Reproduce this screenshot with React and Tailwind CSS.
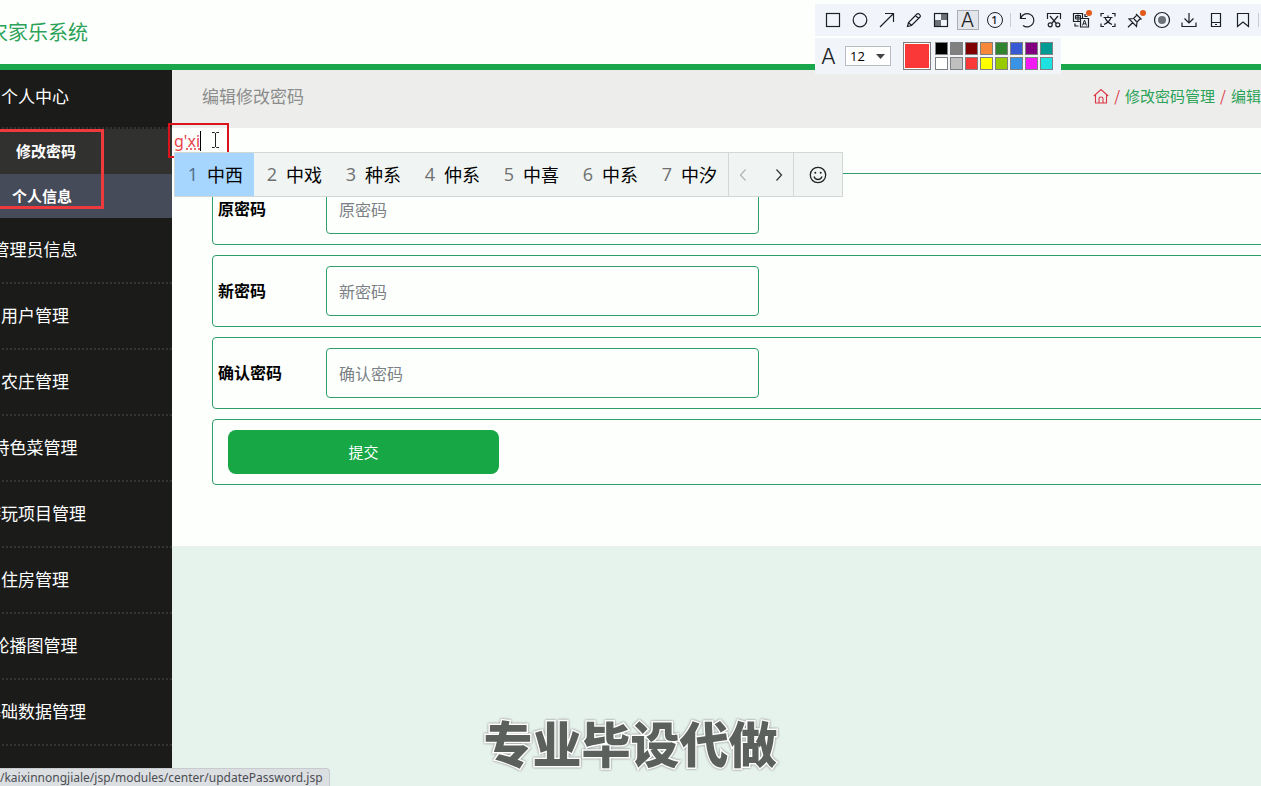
import React, { useState } from 'react';

const menuItems = [
  '管理员信息',
  '用户管理',
  '农庄管理',
  '特色菜管理',
  '游玩项目管理',
  '住房管理',
  '轮播图管理',
  '基础数据管理',
];

const fields = [
  { id: 'oldPassword', label: '原密码' },
  { id: 'newPassword', label: '新密码' },
  { id: 'confirmPassword', label: '确认密码' },
];

const candidates = ['中西', '中戏', '种系', '仲系', '中喜', '中系', '中汐'];

const swatches = [
  'bg-black',
  'bg-[#808080]',
  'bg-[#800000]',
  'bg-[#f7883a]',
  'bg-[#308430]',
  'bg-[#385ad3]',
  'bg-[#800080]',
  'bg-[#009a94]',
  'bg-white',
  'bg-[#c0c0c0]',
  'bg-[#fb3838]',
  'bg-[#ffff00]',
  'bg-[#99cc00]',
  'bg-[#3894e4]',
  'bg-[#f31bf3]',
  'bg-[#1ee1e1]',
];

const Icon = ({ children }) => (
  <svg
    width="18"
    height="18"
    viewBox="0 0 18 18"
    fill="none"
    stroke="#1c1f26"
    strokeWidth="1.2"
    className="shrink-0"
  >
    {children}
  </svg>
);

const drawTools = [
  { name: '矩形', icon: <Icon><rect x="2.5" y="2.5" width="13" height="13" /></Icon> },
  { name: '椭圆', icon: <Icon><circle cx="9" cy="9" r="6.8" /></Icon> },
  { name: '箭头', icon: <Icon><path d="M2 16 15.5 2.5M7 2.5h8.5V11" /></Icon> },
  {
    name: '画笔',
    icon: (
      <Icon>
        <path d="M2.5 15.5l1-4L12 3q1-1 2.2.2l.6.6q1.2 1.2.2 2.2l-8.5 8.5zM10.5 4.5l3 3M3.5 11.5l3 3" />
      </Icon>
    ),
  },
  {
    name: '马赛克',
    icon: (
      <Icon>
        <rect x="9" y="3" width="6" height="6" fill="#6c7078" stroke="none" />
        <rect x="3" y="9" width="6" height="6" fill="#6c7078" stroke="none" />
        <rect x="2.5" y="2.5" width="13" height="13" />
      </Icon>
    ),
  },
];

const editTools = [
  {
    name: '撤销',
    icon: <Icon><path d="M2.5 2v5.5H8M2.8 7.2A6.7 6.7 0 1 1 5 14.5" /></Icon>,
  },
  {
    name: '裁剪',
    icon: (
      <Icon>
        <path d="M2.5 8V2.5h13V8M5 5l6.3 7.5M13 5l-6.3 7.5" />
        <circle cx="5.2" cy="13.8" r="2" />
        <circle cx="12.8" cy="13.8" r="2" />
      </Icon>
    ),
  },
  {
    name: '翻译',
    dot: true,
    icon: (
      <Icon>
        <path d="M8 10.5H1.5v-8h9V7M8.5 7.5h8v8.5h-8zM3 12.5v2.5h3.5M13 3v2.5h2.5" />
        <path d="M3.5 4.5h5v3.5h-5zM6 3.5v7M3.5 6.2h5" strokeWidth="1" />
        <path d="M10.5 14.5l2-5.5 2 5.5M11.2 12.8h2.6" strokeWidth="1" />
      </Icon>
    ),
  },
  {
    name: '识别文字',
    icon: (
      <Icon>
        <path d="M2 5.5V2.5h3M13 2.5h3v3M16 12.5v3h-3M5 15.5H2v-3" />
        <path d="M4.5 6.5h9M9 4.5v2M12 6.5q-1.500 4.500-7 7M6 6.500q1.500 4.500 7 7" />
      </Icon>
    ),
  },
  {
    name: '钉住',
    dot: true,
    icon: (
      <Icon>
        <path d="M10 3l5.500 5.500M11 4L7.500 7.500 3 8l7.500 7.500.500-4.500L14.500 7.500M6.800 11.500 2 16.200M8 8l2.500 2.500" />
      </Icon>
    ),
  },
  {
    name: '录制',
    icon: (
      <Icon>
        <circle cx="9" cy="9" r="7.5" />
        <circle cx="9" cy="9" r="4" fill="#6c7078" stroke="none" />
      </Icon>
    ),
  },
  { name: '保存', icon: <Icon><path d="M9 2v9.5M4.5 7.5 9 12l4.5-4.5M2 11.5v4h14v-4" /></Icon> },
  {
    name: '发送到手机',
    icon: <Icon><path d="M4.5 2.5h9v13h-9zM4.5 11.5h9M8 13.5h2" /></Icon>,
  },
  { name: '收藏', icon: <Icon><path d="M3.5 2.5h11v13L9 11l-5.5 4.5z" /></Icon> },
];

const ToolButton = ({ tool }) => (
  <button type="button" aria-label={tool.name} className="relative flex h-5 w-[27px] items-center justify-center">
    {tool.icon}
    {tool.dot && <span className="absolute top-0 right-0.5 h-1.5 w-1.5 rounded-full bg-[#e2591b]" />}
  </button>
);

const CaptureToolbar = () => {
  const [size, setSize] = useState('12');

  return (
    <div className="absolute top-1 right-0 z-30 flex flex-col items-start">
      <div className="flex h-8 items-center bg-[#f1f5fb] pl-1">
        {drawTools.map((tool) => (
          <ToolButton key={tool.name} tool={tool} />
        ))}
        <button type="button" className="flex w-[27px] items-center justify-center">
          <span className="flex h-5 w-[22px] items-center justify-center border border-[#aaadb3] bg-[#e2e5ea] font-[Inter,sans-serif] text-xl leading-5 font-light text-[#1c1f26]">
            A
          </span>
        </button>
        <button type="button" className="flex w-[27px] items-center justify-center">
          <span className="flex h-4 w-4 items-center justify-center rounded-full border border-[#1c1f26] font-['Open_Sans',sans-serif] text-[11px] leading-3 font-semibold text-[#1c1f26]">
            1
          </span>
        </button>
        <span className="mx-0.5 h-3.5 w-px bg-[#c9ccd1]" />
        {editTools.map((tool) => (
          <ToolButton key={tool.name} tool={tool} />
        ))}
        <span className="mx-0.5 h-3.5 w-px bg-[#c9ccd1]" />
      </div>

      <div className="flex h-[38px] items-center border-t-2 border-white bg-[#f1f5fa] pr-2 pl-1.5">
        <label
          htmlFor="fontSize"
          className="w-6 font-[Inter,sans-serif] text-[22px] leading-6 font-light text-[#1c1f26]"
        >
          A
        </label>
        <div className="relative flex">
          <select
            id="fontSize"
            value={size}
            onChange={(e) => setSize(e.target.value)}
            className="h-5 w-[46px] appearance-none border border-[#b9bcc0] bg-white pl-1 font-['Open_Sans',sans-serif] text-[13px] leading-4 text-black"
          >
            <option>12</option>
            <option>14</option>
            <option>16</option>
          </select>
          <svg className="pointer-events-none absolute top-2 right-1.5" width="9" height="5" viewBox="0 0 9 5">
            <path d="M0 0h9L4.5 5z" fill="#404348" />
          </svg>
        </div>
        <button
          type="button"
          aria-label="当前颜色"
          className="ml-3 h-7 w-7 border border-[#808080] bg-[#fb3838] outline-1 -outline-offset-2 outline-white"
        />
        <div className="ml-1 grid grid-cols-8 gap-0.5">
          {swatches.map((color) => (
            <button key={color} type="button" aria-label="颜色" className={`h-[13px] w-[13px] border border-[#808080] ${color}`} />
          ))}
        </div>
      </div>
    </div>
  );
};

const InputMethodBar = () => (
  <div className="absolute top-[152px] left-[174px] z-20 flex h-[45px] border border-[#d3d7d6] bg-[#f0f4f3] text-lg text-black">
    {candidates.map((word, i) => (
      <button
        key={word}
        type="button"
        className={`flex w-[79px] items-center gap-2 pb-0.5 pl-3 whitespace-nowrap ${i === 0 ? 'bg-[#a6d5fd]' : ''}`}
      >
        <span className={`w-3 text-center font-['Open_Sans',sans-serif] ${i === 0 ? 'text-[#4e6d8a]' : 'text-[#6d706f]'}`}>
          {i + 1}
        </span>
        {word}
      </button>
    ))}
    <div className="flex w-[65px] items-center justify-between border-l border-[#d3d7d6] px-2.5">
      <button type="button" aria-label="上一页">
        <svg width="8" height="12" viewBox="0 0 8 12" fill="none" stroke="#b0b3b2" strokeWidth="1.2">
          <path d="M6.5.5 1.5 6l5 5.5" />
        </svg>
      </button>
      <button type="button" aria-label="下一页">
        <svg width="8" height="12" viewBox="0 0 8 12" fill="none" stroke="#333" strokeWidth="1.2">
          <path d="M1.5.5l5 5.5-5 5.5" />
        </svg>
      </button>
    </div>
    <button
      type="button"
      aria-label="表情"
      className="flex w-[49px] items-center justify-center border-l border-[#d3d7d6]"
    >
      <svg width="18" height="18" viewBox="0 0 18 18" fill="none" stroke="#222" strokeWidth="1.3">
        <circle cx="9" cy="9" r="7.7" />
        <path d="M5 10.5q1 3 4 3t4-3" />
        <circle cx="6.3" cy="6.8" r="1" fill="#222" stroke="none" />
        <circle cx="11.7" cy="6.8" r="1" fill="#222" stroke="none" />
      </svg>
    </button>
  </div>
);

const Sidebar = () => (
  <nav className="w-[274px] shrink-0 bg-[#1b1c1a] text-[17px] text-white">
    <a
      href="#center"
      className="flex h-[59px] items-center justify-center border-b-2 border-dotted border-[#343533] pb-1.5"
    >
      个人中心
    </a>
    <div className="text-[15px] font-bold">
      <a href="#password" className="flex h-[45px] items-center bg-[#31322f] pl-[118px]">
        修改密码
      </a>
      <a href="#info" className="flex h-11 items-center bg-[#464b59] pl-[114px]">
        个人信息
      </a>
    </div>
    {menuItems.map((item) => (
      <a
        key={item}
        href="#menu"
        className="flex h-[66px] items-center justify-center border-b-2 border-dotted border-[#343533] pb-0.5"
      >
        {item}
      </a>
    ))}
  </nav>
);

const PasswordForm = () => (
  <form onSubmit={(e) => e.preventDefault()} className="flex flex-col gap-2.5 bg-[#fdfffd] px-10 pt-[45px] pb-[61px]">
    {fields.map((field) => (
      <div key={field.id} className="flex items-center rounded-sm border border-[#2f9d69] py-2.5 pl-[5px]">
        <label htmlFor={field.id} className="w-[108px] pb-0.5 text-base font-bold text-black">
          {field.label}
        </label>
        <input
          id={field.id}
          type="password"
          placeholder={field.label}
          className="h-[50px] w-[433px] rounded-sm border border-[#2f9d69] px-3 text-base placeholder:text-[#7b8085]"
        />
      </div>
    ))}
    <div className="rounded-sm border border-[#2f9d69] px-[15px] py-2.5">
      <button type="submit" className="block h-11 w-[271px] rounded-lg bg-[#17a845] text-[15px] text-white">
        提交
      </button>
    </div>
  </form>
);

const App = () => {
  return (
    <div className="relative min-h-screen overflow-hidden bg-[#e6f2ec] font-['Noto_Sans_CJK_SC',sans-serif]">
      {/* page is wider than the window on both sides */}
      <div className="-mr-[90px] -ml-[102px] flex min-h-screen flex-col">
        <header className="flex h-[70px] items-center border-b-[6px] border-[#1aa64a] bg-[#fdfffd] pl-[50px]">
          <h1 className="text-xl text-[#2ba257]">开心农家乐系统</h1>
        </header>

        <div className="flex flex-1">
          <Sidebar />
          <main className="min-w-0 flex-1">
            <div className="flex h-[58px] items-center justify-between bg-[#edeeec] px-[30px] pb-1.5">
              <h2 className="text-[17px] text-[#8b8c8b]">编辑修改密码</h2>
              <div className="flex items-center gap-[5px] text-[15px] text-[#2ba257]">
                <a href="#home" aria-label="首页">
                  <svg width="16" height="16" viewBox="0 0 16 16" fill="none" stroke="#dc3545" strokeWidth="1.1">
                    <path d="M.8 8 8 1.5 15.2 8M2.5 6.5v8.5h11V6.5M6 15v-4.5q0-1.500 2-1.500t2 1.500V15" />
                  </svg>
                </a>
                <span className="text-[#dc3545]">/</span>
                <a href="#manage">修改密码管理</a>
                <span className="text-[#dc3545]">/</span>
                <span>编辑修改密码</span>
              </div>
            </div>
            <PasswordForm />
          </main>
        </div>
      </div>

      {/* annotations */}
      <div className="absolute top-[129px] left-0 z-10 h-20 w-[104px] border-[3px] border-l-0 border-[#ee3a3c]" />
      <div className="absolute top-[123px] left-[168px] z-10 flex h-[35px] w-[61px] items-start border-2 border-[#d9141b] pt-1.5 pl-1">
        <span className="border-r border-black font-['Noto_Sans',sans-serif] text-base leading-5 text-[#e8434a] underline decoration-dotted underline-offset-2">
          g'xi
        </span>
        <svg className="ml-2.5" width="9" height="18" viewBox="0 0 9 18" fill="none" stroke="#222">
          <path d="M1 1.5h2.5l1 1 1-1H8M4.5 2v14M1 16.5h2.5l1-1 1 1H8" />
        </svg>
      </div>

      <InputMethodBar />
      <CaptureToolbar />

      <p className="absolute inset-x-0 bottom-2 z-10 text-center text-[49px] leading-[72px] font-black text-[#5b605d] [-webkit-text-stroke:3px_white] [paint-order:stroke_fill] drop-shadow-[0_0_1px_#777]">
        专业毕设代做
      </p>

      <div className="absolute bottom-0 left-0 z-20 h-[18px] rounded-tr-sm border-t border-r border-[#c8cbcd] bg-[#dcdfe2] pt-px pr-1.5 font-['Noto_Sans',sans-serif] text-xs text-[#4b4e52]">
        /kaixinnongjiale/jsp/modules/center/updatePassword.jsp
      </div>
    </div>
  );
};

export default App;
